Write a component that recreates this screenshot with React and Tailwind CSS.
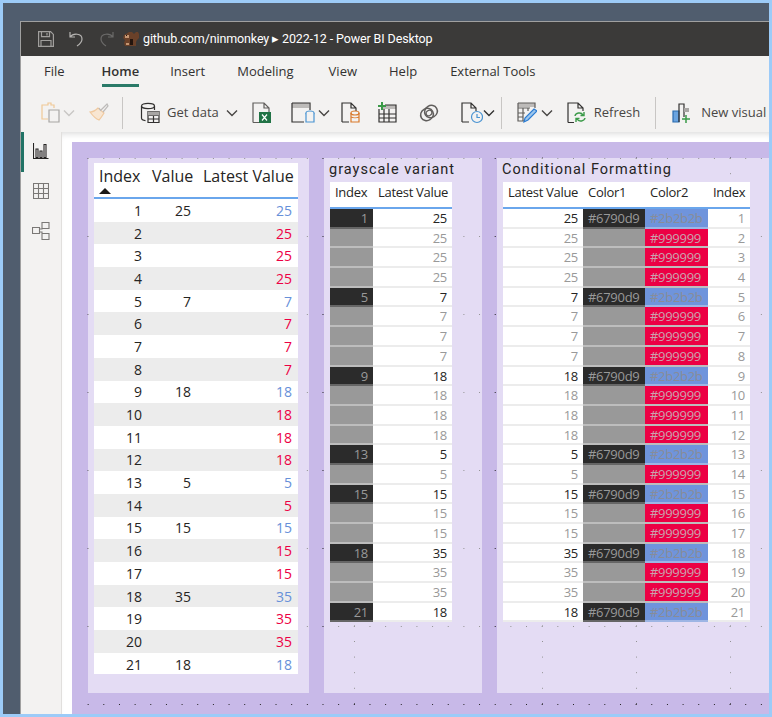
const FONT = 'font-["Open_Sans","Noto_Sans",sans-serif]'

// index -> latest value, anchors are the rows that really hold a value
const ROWS = [25, 25, 25, 25, 7, 7, 7, 7, 18, 18, 18, 18, 5, 5, 15, 15, 15, 35, 35, 35, 18].map((latest, i) => ({
  index: i + 1,
  latest,
  anchor: [1, 5, 9, 13, 15, 18, 21].includes(i + 1),
}))

const Chevron = ({ className = 'text-[#323130]' }) => (
  <svg width="12" height="8" viewBox="0 0 12 8" fill="none" stroke="currentColor" strokeWidth="1.4" className={`shrink-0 ${className}`}>
    <path d="M1 1.500l5 5 5-5" />
  </svg>
)

const Icon = ({ w = 20, children, className = '' }) => (
  <svg width={w} height="22" viewBox={`0 0 ${w} 22`} fill="none" strokeWidth="1.2" className={`shrink-0 ${className}`}>
    {children}
  </svg>
)

function TitleBar() {
  return (
    <div className="flex h-[34px] items-center bg-[#3b3a39] pl-[17px] text-white">
      <svg width="16" height="16" viewBox="0 0 16 16" fill="none" stroke="#a19f9d" strokeWidth="1.2">
        <path d="M.6.6h12l2.8 2.8v12H.6zM3.500.6v5h8v-5M3 15.400V9.500h10v5.900M9 2v2.500" />
      </svg>
      <svg width="15" height="16" viewBox="0 0 15 16" fill="none" stroke="#b5b3b1" strokeWidth="1.2" className="ml-[15px]">
        <path d="M1 1v5h5M1 6c3-4 12-4 12 2 0 3-2 5-5 7" />
      </svg>
      <svg width="15" height="16" viewBox="0 0 15 16" fill="none" stroke="#6b6a69" strokeWidth="1.2" className="ml-[15px]">
        <path d="M14 1v5H9M14 6c-3-4-12-4-12 2 0 3 2 5 5 7" />
      </svg>
      <svg width="16" height="15" viewBox="0 0 16 15" className="ml-[9px]">
        <path d="M3 2l3-2h3l2 2 2-2h2l1 2v4l-2 2-1 2v4H2L1 11l1-3-2-2 1-3z" fill="#6a4129" />
        <path d="M2 3h4v3H2zM3 11h3v2H3z" fill="#c59672" />
        <path d="M7 7h3v6H7zM3 3h1v1H3z" fill="#24150e" />
      </svg>
      <span className="ml-[4px] whitespace-nowrap font-['Roboto',sans-serif] text-[12.5px] tracking-[-0.12px]">github.com/ninmonkey ▸ 2022-12 - Power BI Desktop</span>
    </div>
  )
}

function Tabs() {
  return (
    <div className={`${FONT} flex h-[36px] items-start bg-[#f3f2f1] pt-[6px] text-[13px] text-[#323130]`}>
      <span className="ml-[23px]">File</span>
      <span className="ml-[37px] flex h-[25px] flex-col justify-between font-semibold">
        Home
        <span className="h-[3px] bg-[#2a7a68]" />
      </span>
      <span className="ml-[31px]">Insert</span>
      <span className="ml-[32px]">Modeling</span>
      <span className="ml-[35px]">View</span>
      <span className="ml-[32px]">Help</span>
      <span className="ml-[33px]">External Tools</span>
    </div>
  )
}

const Sep = ({ className }) => <span className={`h-[32px] w-px shrink-0 bg-[#c8c6c4] ${className}`} />

function Ribbon() {
  return (
    <div className={`${FONT} flex h-[40px] items-center overflow-hidden bg-[#f3f2f1] pt-[1px] text-[13px] text-[#484644]`}>
      <Icon w={20} className="ml-[20px]">
        <path d="M13 6V3H10V1H7v2H4H1v14h6" stroke="#f0c896" />
        <path d="M8 8h10v12H8z" stroke="#a8a6a4" />
      </Icon>
      <Chevron className="ml-[2px] text-[#c8c6c4]" />
      <Icon w={20} className="ml-[14px]">
        <path d="M1 10c4 0 6-2 8-4l6 5c-2 3-3 5-5 7-3-1-6-4-9-8z" fill="#f8e6d2" stroke="#f0c99f" />
        <path d="M10 6l2 3M12 8l6-6 1 2-5 6" stroke="#bdbbb9" />
      </Icon>
      <Sep className="ml-[13px]" />
      <Icon w={20} className="ml-[17px]">
        <ellipse cx="8" cy="4" rx="6.500" ry="2.600" stroke="#323130" />
        <path d="M1.500 4v12c0 1.500 2 2.400 4 2.600M14.500 4v4" stroke="#323130" />
        <path d="M8 9.500h11v11H8zM8 13.500h11M8 17h11M13.500 13.500v7" stroke="#323130" />
        <path d="M8 9.500h11v4H8z" fill="#a8a6a4" />
      </Icon>
      <span className="ml-[7px] whitespace-nowrap">Get data</span>
      <Chevron className="ml-[7px]" />
      <Icon w={20} className="ml-[14px]">
        <path d="M1 20.500V1h11l5 5v5M12 1v5h5M1 20.500h6" stroke="#605e5c" />
        <rect x="7" y="10" width="12" height="11" fill="#217346" />
        <path d="M10 12.500l5 6M15 12.500l-5 6" stroke="#fff" />
      </Icon>
      <Icon w={26} className="ml-[19px]">
        <path d="M1 1h17v5H1z" fill="#bdbbb9" />
        <path d="M1 1h18v7M1 1v19h12" stroke="#323130" />
        <ellipse cx="19" cy="11" rx="4" ry="2" stroke="#4a94d2" />
        <path d="M15 11v9h8v-9" stroke="#4a94d2" fill="#f3f2f1" />
      </Icon>
      <Chevron className="ml-[1px]" />
      <Icon w={20} className="ml-[11px]">
        <path d="M1 20V1h9l5 5v3M10 1v5h5M1 20h7" stroke="#323130" />
        <ellipse cx="14" cy="11" rx="4" ry="2" stroke="#d9782a" />
        <path d="M10 11v9h8v-9M10 15c2 1 6 1 8 0" stroke="#d9782a" />
      </Icon>
      <Icon w={20} className="ml-[16px]">
        <path d="M5 3h14v4H5z" fill="#bdbbb9" />
        <path d="M2 7v13h17V3H8M2 12h17M2 16h17M7 7v13M12 7v13" stroke="#323130" />
        <path d="M5 0v8M1 4h8" stroke="#3a9a48" strokeWidth="2" />
      </Icon>
      <Icon w={20} className="ml-[22px]">
        <ellipse cx="8" cy="12.500" rx="6.500" ry="6" stroke="#605e5c" strokeWidth="1.500" transform="rotate(-30 8 12.500)" />
        <ellipse cx="12" cy="9.500" rx="6.500" ry="6" stroke="#605e5c" strokeWidth="1.500" transform="rotate(-30 12 9.500)" />
        <ellipse cx="10" cy="11" rx="3" ry="2.500" stroke="#605e5c" strokeWidth="1.200" transform="rotate(-30 10 11)" />
      </Icon>
      <Icon w={22} className="ml-[22px]">
        <path d="M1 20V1h9l5 5v3M10 1v5h5M1 20h7" stroke="#323130" />
        <circle cx="16" cy="15" r="5.500" stroke="#4a94d2" fill="#f3f2f1" />
        <path d="M16 12v3.500h3" stroke="#4a94d2" />
      </Icon>
      <Chevron />
      <Sep className="ml-[6px]" />
      <Icon w={20} className="ml-[15px]">
        <path d="M1 1h17v4H1z" fill="#bdbbb9" />
        <path d="M1 1h17v5M1 1v18h6M1 6h12M1 11h7M1 15h5M6 6v13M11 6v3" stroke="#605e5c" />
        <path d="M7 20l1-4 9-9 3 2-9 9z" fill="#9cc6ec" stroke="#2b7cd3" />
      </Icon>
      <Chevron className="ml-[4px]" />
      <Icon w={20} className="ml-[14px]">
        <path d="M1 20.500V1h10l5 5v3M11 1v5h5M1 20.500h6" stroke="#323130" />
        <path d="M8 14c.5-3 6-4.500 8-1M17 10v3.500h-3.500M18 16c-.5 3-6 4.500-8 1M9 20v-3.500h3.500" stroke="#3a9a48" strokeWidth="1.400" />
      </Icon>
      <span className="ml-[7px]">Refresh</span>
      <Sep className="ml-[15px]" />
      <Icon w={20} className="ml-[16px]">
        <path d="M1 9h6v11H1z" fill="#6aa4e0" stroke="#2b6cb0" />
        <path d="M7 20V2h5v13" stroke="#323130" />
        <path d="M12 6h5v4h-5z" fill="#a8a6a4" />
        <path d="M14 13v8M10 17h8" stroke="#3a9a48" strokeWidth="1.500" />
      </Icon>
      <span className="ml-[9px] whitespace-nowrap">New visual</span>
    </div>
  )
}

function Sidebar() {
  return (
    <div className="relative flex w-[41px] shrink-0 flex-col items-center border-r border-[#e1dfdd] bg-[#f3f2f1] pt-[11px]">
      <span className="absolute left-0 top-0 h-[40px] w-[3px] bg-[#217366]" />
      <svg width="16" height="16" viewBox="0 0 16 16" fill="none" stroke="#252423" strokeWidth="1.1">
        <path d="M.5 0v15.500H15.500M3 14.500V6h2v8.500zM7 14.500V8h2v6.500zM11 14.500V1.500h2v13z" />
      </svg>
      <svg width="16" height="16" viewBox="0 0 16 16" fill="none" stroke="#7a7876" strokeWidth="1.1" className="mt-[24px]">
        <path d="M.5.500h15v15H.500zM.5 5.500h15M.5 10.500h15M5.500.5v15M10.500.5v15" />
      </svg>
      <svg width="18" height="18" viewBox="0 0 18 18" fill="none" stroke="#7a7876" strokeWidth="1.1" className="mt-[23px]">
        <path d="M10 .5h7v6h-7zM.5 5.500h7v6h-7zM10 11.500h7v6h-7zM7.500 7H10V4M7.500 10H10v3" />
      </svg>
    </div>
  )
}

function MainTable() {
  return (
    <div className={`${FONT} h-[511px] w-[204px] overflow-hidden bg-white text-[#252423]`}>
      <div className="grid h-[36px] grid-cols-[52px_51px_101px] border-b-2 border-[#6aa6ec] text-[16px] leading-[21px]">
        <div className="relative pl-[5px] pt-[3px]">
          Index
          <svg width="12" height="6" viewBox="0 0 12 6" className="absolute left-[5px] top-[25px]">
            <path d="M6 0l6 6H0z" fill="#1b1a19" />
          </svg>
        </div>
        <div className="pl-[6px] pt-[3px]">Value</div>
        <div className="whitespace-nowrap pl-[6px] pt-[3px]">Latest Value</div>
      </div>
      {ROWS.map(r => (
        <div key={r.index} className={`grid h-[22.7px] grid-cols-[52px_51px_101px] items-center text-right text-[14px] ${r.index % 2 ? 'bg-white' : 'bg-[#ececec]'}`}>
          <span className="pr-[4px]">{r.index}</span>
          <span className="pr-[6px]">{r.anchor ? r.latest : ''}</span>
          <span className={`pr-[6px] ${r.anchor ? 'text-[#6790d9]' : 'text-[#ec0044]'}`}>{r.latest}</span>
        </div>
      ))}
    </div>
  )
}

function Heading({ children }) {
  return <div className="-ml-px h-[24px] whitespace-nowrap pt-[3px] font-['Roboto',sans-serif] text-[14.5px] leading-[18px] tracking-[1px] text-[#252423]">{children}</div>
}

function HeaderCell({ children }) {
  return <div className="whitespace-nowrap pl-[5px] pt-[1px]">{children}</div>
}

// rows that carry a value are dark, the filled-down ones are gray
const indexCell = r => (r.anchor ? 'bg-[#2b2b2b] text-[#999999] border-[#666666]' : 'bg-[#999999] border-[#bdbdbd]')

function GrayTable() {
  return (
    <div className={`${FONT} w-[122px] bg-white text-[13px] tracking-[-0.3px] text-[#252423]`}>
      <div className="grid h-[27px] grid-cols-[43px_79px] border-b-2 border-[#6aa6ec] leading-[18px]">
        <HeaderCell>Index</HeaderCell>
        <HeaderCell>Latest Value</HeaderCell>
      </div>
      {ROWS.map(r => (
        <div key={r.index} className="grid h-[19.7px] grid-cols-[43px_79px] text-right leading-[15.7px]">
          <span className={`border-b-2 pr-[5px] pt-[2px] ${indexCell(r)}`}>{r.anchor ? r.index : ''}</span>
          <span className={`border-b-2 border-[#ececec] pr-[5px] pt-[2px] ${r.anchor ? 'text-[#252423]' : 'text-[#999999]'}`}>{r.latest}</span>
        </div>
      ))}
    </div>
  )
}

function FormatTable() {
  return (
    <div className={`${FONT} w-[247px] bg-white text-[13px] tracking-[-0.3px] text-[#252423]`}>
      <div className="grid h-[27px] grid-cols-[80px_62px_63px_42px] border-b-2 border-[#6aa6ec] leading-[18px]">
        <HeaderCell>Latest Value</HeaderCell>
        <HeaderCell>Color1</HeaderCell>
        <HeaderCell>Color2</HeaderCell>
        <HeaderCell>Index</HeaderCell>
      </div>
      {ROWS.map(r => (
        <div key={r.index} className="grid h-[19.7px] grid-cols-[80px_62px_63px_42px] leading-[15.7px]">
          <span className={`border-b-2 border-[#ececec] pr-[5px] pt-[2px] text-right ${r.anchor ? 'text-[#252423]' : 'text-[#999999]'}`}>{r.latest}</span>
          <span className={`border-b-2 pl-[5px] pt-[2px] ${indexCell(r)}`}>{r.anchor ? '#6790d9' : ''}</span>
          <span className={`border-b-2 pl-[5px] pt-[2px] ${r.anchor ? 'border-[#9db5e4] bg-[#6f94dc] text-[#888c98]' : 'border-[#bdbdbd] bg-[#ec0044] text-[#c9a3ae]'}`}>{r.anchor ? '#2b2b2b' : '#999999'}</span>
          <span className="border-b-2 border-[#ececec] pr-[5px] pt-[2px] text-right text-[#999999]">{r.index}</span>
        </div>
      ))}
    </div>
  )
}

export default function App() {
  return (
    <div className="h-[717px] w-[772px] overflow-hidden border-[3px] border-[#9ccbf8] bg-[#505d6e]">
      <div className="ml-[17px] mt-[18px] flex h-[693px] flex-col border-l border-t border-[#a0a0a0]">
        <TitleBar />
        <Tabs />
        <Ribbon />
        <div className="flex min-h-0 flex-1">
          <Sidebar />
          <div className="flex-1 bg-white pl-[10px] pt-[10px] shadow-[inset_0_6px_6px_-4px_rgba(0,0,0,0.14)]">
            <div className="h-full bg-[#c8b9e8] pl-px pt-px">
              <div className="flex h-full gap-[15px] bg-[radial-gradient(circle_at_0.5px_0.5px,#222_0.7px,transparent_0.8px),radial-gradient(circle_at_0.5px_0.5px,#222_0.7px,transparent_0.8px)] bg-[size:94px_15.6px,15.67px_78px] bg-[position:-1px_-1px,-1px_15px] pl-[15px] pt-[15px]">
                <div className="h-[535px] w-[221px] bg-white/50 pl-[6px] pt-[5px]">
                  <MainTable />
                </div>
                <div className="h-[535px] w-[158px] bg-white/50 pl-[6px]">
                  <Heading>grayscale variant</Heading>
                  <GrayTable />
                </div>
                <div className="h-[535px] flex-1 bg-white/50 pl-[6px]">
                  <Heading>Conditional Formatting</Heading>
                  <FormatTable />
                </div>
              </div>
            </div>
          </div>
        </div>
      </div>
    </div>
  )
}
